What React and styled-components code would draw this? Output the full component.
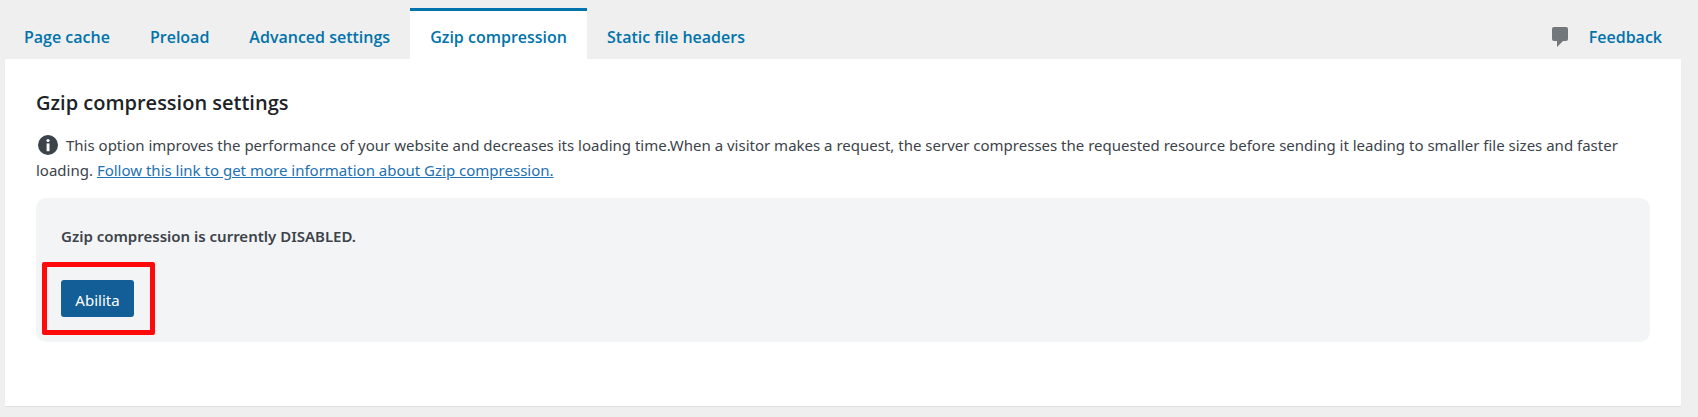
import React, { useState } from 'react'
import styled, { createGlobalStyle } from 'styled-components'

const GlobalStyle = createGlobalStyle`
  *, *::before, *::after {
    box-sizing: border-box;
  }

  body {
    margin: 0;
    background: #efefef;
    color: #3c434a;
    font-family: "Segoe UI", "Noto Sans", "Open Sans", sans-serif;
    font-size: 15px;
    line-height: 25px;
  }
`

const Page = styled.main`
  padding: 8px 17px 10px 5px;
`

const TopBar = styled.div`
  display: flex;
  justify-content: space-between;
  margin: 0 -1px;
`

const Tabs = styled.nav`
  display: flex;
`

const Tab = styled.a`
  padding: 14px 20px 10px;
  border-top: 3px solid ${props => props.$active ? '#0073aa' : 'transparent'};
  background: ${props => props.$active ? '#fff' : 'transparent'};
  color: #0073aa;
  font-family: "Segoe UI", "Open Sans", sans-serif;
  font-size: 16px;
  font-weight: 600;
  line-height: 24px;
  text-decoration: none;
  white-space: nowrap;

  &:hover {
    color: #00a0d2;
  }
`

const Feedback = styled.div`
  display: flex;
  align-items: center;

  svg {
    width: 18px;
    height: 20px;
    margin-top: 7px;
    fill: #72777c;
  }
`

const Card = styled.section`
  padding: 32px 31px 64px;
  background: #fff;
  box-shadow: 0 1px 1px rgba(0, 0, 0, 0.05);
`

const Title = styled.h2`
  margin: 0;
  color: #1d2327;
  font-family: "Segoe UI", "Open Sans", sans-serif;
  font-size: 20px;
  font-weight: 600;
  line-height: 24px;
`

const Description = styled.p`
  margin: 18px 0 15px;

  svg {
    width: 20px;
    height: 20px;
    margin: 0 8px 0 2px;
    vertical-align: -4px;
  }

  a {
    color: #2271b1;
  }
`

const StatusBox = styled.div`
  padding: 26px 25px 25px;
  border-radius: 10px;
  background: #f3f4f5;
`

const Status = styled.p`
  margin: 0 0 31px;
  font-weight: 600;
`

const ButtonWrap = styled.div`
  position: relative;
  width: fit-content;
`

const Highlight = styled.span`
  position: absolute;
  inset: -18px -21px -18px -19px;
  border: 5px solid #ff0a0a;
  border-radius: 2px;
  pointer-events: none;
`

const Button = styled.button`
  display: block;
  min-width: 73px;
  padding: 8px 12px 4px;
  border: 0;
  border-radius: 3px;
  background: #135e96;
  color: #fff;
  font: inherit;
  cursor: pointer;
`

const tabs = [
  { label: 'Page cache', href: '#page-cache' },
  { label: 'Preload', href: '#preload' },
  { label: 'Advanced settings', href: '#advanced' },
  { label: 'Gzip compression', href: '#gzip' },
  { label: 'Static file headers', href: '#headers' }
]

function InfoIcon() {
  return (
    <svg viewBox="0 0 20 20" aria-hidden="true">
      <circle cx="10" cy="10" r="10" fill="#3c434a" />
      <circle cx="10" cy="5.5" r="1.6" fill="#fff" />
      <path d="M8.6 8.4h2.9v7.8H8.6z" fill="#fff" />
    </svg>
  )
}

function App() {
  const [active, setActive] = useState('#gzip')

  return (
    <>
      <GlobalStyle />
      <Page>
        <TopBar>
          <Tabs>
            {tabs.map(tab => (
              <Tab
                key={tab.href}
                href={tab.href}
                $active={tab.href === active}
                onClick={() => setActive(tab.href)}
              >
                {tab.label}
              </Tab>
            ))}
          </Tabs>
          <Feedback>
            <svg viewBox="0 0 18 20" aria-hidden="true">
              <path d="M3 0h12q2 0 2 2v10q0 2-2 2h-3l-6 6v-6H3q-2 0-2-2V2q0-2 2-2z" />
            </svg>
            <Tab href="#feedback">Feedback</Tab>
          </Feedback>
        </TopBar>
        <Card>
          <Title>Gzip compression settings</Title>
          <Description>
            <InfoIcon />
            This option improves the performance of your website and decreases its loading time.When a visitor makes a request, the server compresses the requested resource before sending it leading to smaller file sizes and faster loading.{' '}
            <a href="#more">Follow this link to get more information about Gzip compression.</a>
          </Description>
          <StatusBox>
            <Status>Gzip compression is currently DISABLED.</Status>
            <ButtonWrap>
              <Button type="button">Abilita</Button>
              <Highlight />
            </ButtonWrap>
          </StatusBox>
        </Card>
      </Page>
    </>
  )
}

export default App
